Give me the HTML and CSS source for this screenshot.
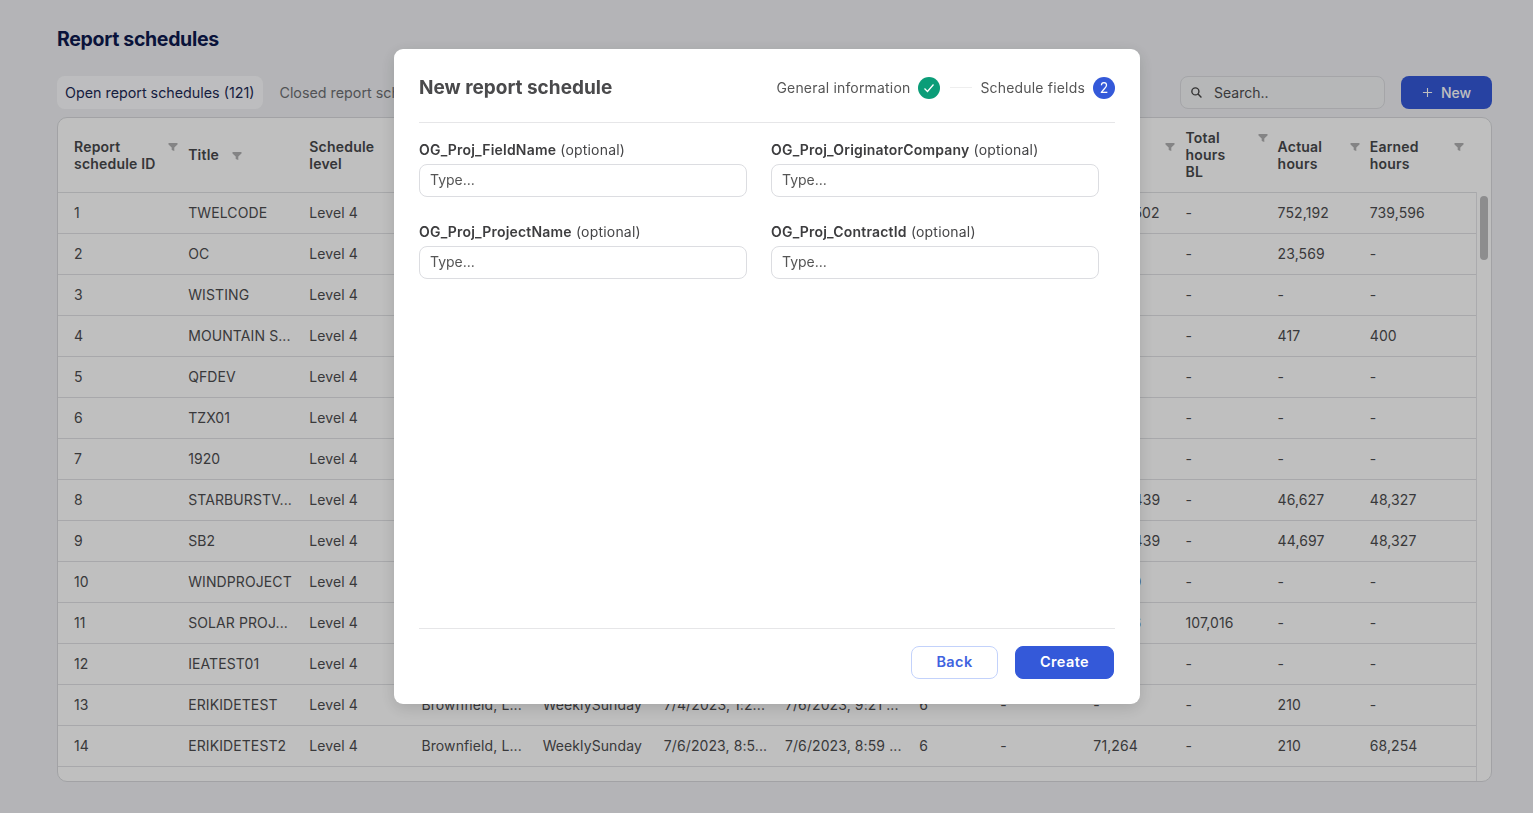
FILE: index.html
```html
<!DOCTYPE html>
<html lang="en">
<head>
<meta charset="utf-8">
<title>Report schedules</title>
<link rel="stylesheet" href="styles.css">
</head>
<body>
<svg class="sprite" width="0" height="0" aria-hidden="true"><defs><symbol id="funnel" viewBox="0 0 10 10"><path d="M0.5 1h9v1.6L6.3 5.6V9L3.7 8V5.6L0.5 2.6z"/></symbol></defs></svg>
<main class="page">
  <h1 class="page-title">Report schedules</h1>
  <div class="toolbar">
    <div class="tabs">
      <span class="tab tab-active">Open report schedules (121)</span>
      <span class="tab">Closed report schedules (12)</span>
    </div>
    <div class="actions">
      <label class="search">
        <svg class="search-icon" viewBox="0 0 14 14"><circle cx="5.8" cy="5.8" r="3.8"/><path d="M8.7 8.7l3.6 3.6"/></svg>
        <span>Search..</span>
      </label>
      <button class="new-btn"><svg class="plus" viewBox="0 0 12 12"><path d="M6 1v10M1 6h10"/></svg>New</button>
    </div>
  </div>
  <div class="table-card">
    <div class="table-scroll">
      <table class="grid">
        <colgroup>
          <col class="c1"><col class="c2"><col class="c3"><col class="c4"><col class="c5"><col class="c6"><col class="c7"><col class="c8"><col class="c9"><col class="c10"><col class="c11"><col class="c12"><col class="c13">
        </colgroup>
        <thead>
          <tr>
            <th><div class="th"><span>Report<br>schedule ID</span><svg class="funnel"><use href="#funnel"/></svg></div></th>
            <th><div class="th th-near"><span>Title</span><svg class="funnel"><use href="#funnel"/></svg></div></th>
            <th><div class="th"><span>Schedule<br>level</span></div></th>
            <th><div class="th"><span>Project<br>type</span></div></th>
            <th><div class="th"><span>Frequency</span></div></th>
            <th><div class="th"><span>Created</span></div></th>
            <th><div class="th"><span>Updated</span></div></th>
            <th><div class="th"><span>Rev</span></div></th>
            <th><div class="th"><span>Cost<br>BL</span></div></th>
            <th><div class="th"><span>Total<br>hours</span><svg class="funnel"><use href="#funnel"/></svg></div></th>
            <th><div class="th"><span>Total<br>hours<br>BL</span><svg class="funnel"><use href="#funnel"/></svg></div></th>
            <th><div class="th"><span>Actual<br>hours</span><svg class="funnel"><use href="#funnel"/></svg></div></th>
            <th><div class="th th-last"><span>Earned<br>hours</span><svg class="funnel"><use href="#funnel"/></svg></div></th>
          </tr>
        </thead>
        <tbody>
          <tr><td>1</td><td>TWELCODE</td><td>Level 4</td><td>Brownfield, L...</td><td>WeeklySunday</td><td>6/1/2023, 1:2...</td><td>7/6/2023, 9:21 ...</td><td>6</td><td>-</td><td>1,048,502</td><td>-</td><td>752,192</td><td>739,596</td></tr>
          <tr><td>2</td><td>OC</td><td>Level 4</td><td>Brownfield, L...</td><td>WeeklySunday</td><td>6/2/2023, 1:2...</td><td>7/6/2023, 9:21 ...</td><td>6</td><td>-</td><td>-</td><td>-</td><td>23,569</td><td>-</td></tr>
          <tr><td>3</td><td>WISTING</td><td>Level 4</td><td>Brownfield, L...</td><td>WeeklySunday</td><td>6/2/2023, 1:2...</td><td>7/6/2023, 9:21 ...</td><td>6</td><td>-</td><td>-</td><td>-</td><td>-</td><td>-</td></tr>
          <tr><td>4</td><td>MOUNTAIN S...</td><td>Level 4</td><td>Brownfield, L...</td><td>WeeklySunday</td><td>6/3/2023, 1:2...</td><td>7/6/2023, 9:21 ...</td><td>6</td><td>-</td><td>-</td><td>-</td><td>417</td><td>400</td></tr>
          <tr><td>5</td><td>QFDEV</td><td>Level 4</td><td>Brownfield, L...</td><td>WeeklySunday</td><td>6/3/2023, 1:2...</td><td>7/6/2023, 9:21 ...</td><td>6</td><td>-</td><td>-</td><td>-</td><td>-</td><td>-</td></tr>
          <tr><td>6</td><td>TZX01</td><td>Level 4</td><td>Brownfield, L...</td><td>WeeklySunday</td><td>6/4/2023, 1:2...</td><td>7/6/2023, 9:21 ...</td><td>6</td><td>-</td><td>-</td><td>-</td><td>-</td><td>-</td></tr>
          <tr><td>7</td><td>1920</td><td>Level 4</td><td>Brownfield, L...</td><td>WeeklySunday</td><td>6/4/2023, 1:2...</td><td>7/6/2023, 9:21 ...</td><td>6</td><td>-</td><td>-</td><td>-</td><td>-</td><td>-</td></tr>
          <tr><td>8</td><td>STARBURSTV...</td><td>Level 4</td><td>Brownfield, L...</td><td>WeeklySunday</td><td>6/5/2023, 1:2...</td><td>7/6/2023, 9:21 ...</td><td>6</td><td>-</td><td>1,048,439</td><td>-</td><td>46,627</td><td>48,327</td></tr>
          <tr><td>9</td><td>SB2</td><td>Level 4</td><td>Brownfield, L...</td><td>WeeklySunday</td><td>6/5/2023, 1:2...</td><td>7/6/2023, 9:21 ...</td><td>6</td><td>-</td><td>1,048,439</td><td>-</td><td>44,697</td><td>48,327</td></tr>
          <tr><td>10</td><td>WINDPROJECT</td><td>Level 4</td><td>Brownfield, L...</td><td>WeeklySunday</td><td>6/6/2023, 1:2...</td><td>7/6/2023, 9:21 ...</td><td>6</td><td>-</td><td>107,010</td><td>-</td><td>-</td><td>-</td></tr>
          <tr><td>11</td><td>SOLAR PROJ...</td><td>Level 4</td><td>Brownfield, L...</td><td>WeeklySunday</td><td>6/6/2023, 1:2...</td><td>7/6/2023, 9:21 ...</td><td>6</td><td>-</td><td>107,016</td><td>107,016</td><td>-</td><td>-</td></tr>
          <tr><td>12</td><td>IEATEST01</td><td>Level 4</td><td>Brownfield, L...</td><td>WeeklySunday</td><td>7/3/2023, 1:2...</td><td>7/6/2023, 9:21 ...</td><td>6</td><td>-</td><td>-</td><td>-</td><td>-</td><td>-</td></tr>
          <tr><td>13</td><td>ERIKIDETEST</td><td>Level 4</td><td>Brownfield, L...</td><td>WeeklySunday</td><td>7/4/2023, 1:2...</td><td>7/6/2023, 9:21 ...</td><td>6</td><td>-</td><td>-</td><td>-</td><td>210</td><td>-</td></tr>
          <tr><td>14</td><td>ERIKIDETEST2</td><td>Level 4</td><td>Brownfield, L...</td><td>WeeklySunday</td><td>7/6/2023, 8:5...</td><td>7/6/2023, 8:59 ...</td><td>6</td><td>-</td><td>71,264</td><td>-</td><td>210</td><td>68,254</td></tr>
          <tr><td>15</td><td>ERIKIDETEST3</td><td>Level 4</td><td>Brownfield, L...</td><td>WeeklySunday</td><td>7/6/2023, 9:1...</td><td>7/6/2023, 9:14 ...</td><td>6</td><td>-</td><td>-</td><td>-</td><td>-</td><td>-</td></tr>
        </tbody>
      </table>
    </div>
    <div class="scroll-track"><div class="scroll-thumb"></div></div>
  </div>
</main>
<div class="overlay"></div>
<section class="modal" role="dialog" aria-label="New report schedule">
  <header class="modal-head">
    <h2 class="modal-title">New report schedule</h2>
    <ol class="steps">
      <li class="step">General information
        <span class="badge badge-done"><svg class="check" viewBox="0 0 12 12"><path d="M1.5 6.5l3 3 6-7"/></svg></span>
      </li>
      <li class="step-line"></li>
      <li class="step">Schedule fields <span class="badge badge-current">2</span></li>
    </ol>
  </header>
  <div class="fields">
    <div class="field"><label class="field-label"><b>OG_Proj_FieldName</b> (optional)</label><input class="input" placeholder="Type..."></div>
    <div class="field"><label class="field-label"><b>OG_Proj_OriginatorCompany</b> (optional)</label><input class="input" placeholder="Type..."></div>
    <div class="field"><label class="field-label"><b>OG_Proj_ProjectName</b> (optional)</label><input class="input" placeholder="Type..."></div>
    <div class="field"><label class="field-label"><b>OG_Proj_ContractId</b> (optional)</label><input class="input" placeholder="Type..."></div>
  </div>
  <footer class="modal-foot">
    <button class="btn btn-back">Back</button>
    <button class="btn btn-create">Create</button>
  </footer>
</section>
</body>
</html>
```
FILE: styles.css
```css
* { box-sizing: border-box; }
html, body { margin: 0; height: 100%; }
body {
  background: #f0f1f4;
  font-family: Inter, "Liberation Sans", sans-serif;
  font-size: 14px;
  color: #4d4d4f;
  overflow: hidden;
}
.sprite { position: absolute; }
.page {
  height: 813px;
  padding: 27px 41px 31px 57px;
  display: flex;
  flex-direction: column;
}
.page-title {
  margin: 0;
  font-size: 19.5px;
  line-height: 24px;
  font-weight: 700;
  letter-spacing: -0.32px;
  color: #0e1a4f;
}
.toolbar {
  margin-top: 25px;
  display: flex;
  justify-content: space-between;
  height: 33px;
}
.tabs { display: flex; gap: 8px; }
.tab {
  display: flex;
  align-items: center;
  padding: 0 9px 0 8px;
  border-radius: 8px;
  font-size: 14.3px;
  color: #6e6f73;
}
.tab-active { background: #fdfdff; color: #1c2a55; }
.actions { display: flex; gap: 16px; }
.search {
  width: 205px;
  display: flex;
  align-items: center;
  gap: 11px;
  padding-left: 9px;
  border: 1px solid #dcdde1;
  border-radius: 8px;
  background: #f3f4f6;
  color: #4d4d4f;
}
.search-icon { width: 13px; height: 13px; fill: none; stroke: #444; stroke-width: 1.5; }
.new-btn {
  width: 91px;
  border: 0;
  border-radius: 8px;
  background: #3459d9;
  color: #fff;
  font: 500 14px Inter, sans-serif;
  display: flex;
  align-items: center;
  justify-content: center;
  gap: 8px;
}
.plus { width: 11px; height: 11px; fill: none; stroke: #fff; stroke-width: 1.2; }
.table-card {
  margin-top: 8px;
  flex: 1;
  min-height: 0;
  display: flex;
  background: #fff;
  border: 1px solid #d8d9dd;
  border-radius: 10px;
  overflow: hidden;
}
.table-scroll { flex: 1; min-width: 0; overflow: hidden; }
.grid { width: 1418px; border-collapse: collapse; table-layout: fixed; }
.c1 { width: 114px; } .c2 { width: 121px; } .c3 { width: 112px; } .c4, .c5, .c6 { width: 121px; }
.c7 { width: 134px; } .c8 { width: 81px; } .c9 { width: 93px; } .c10, .c11, .c12 { width: 92px; } .c13 { width: 122px; }
.grid th {
  height: 74px;
  padding: 0 0 0 16px;
  text-align: left;
  vertical-align: middle;
  border-bottom: 1px solid #dfe0e3;
  font-size: 14px;
  line-height: 17px;
  letter-spacing: 0.2px;
  font-weight: 600;
  color: #47484b;
}
.th { display: flex; justify-content: space-between; align-items: flex-start; margin-right: -6px; }
.th-near { justify-content: flex-start; gap: 13px; }
.th-last { margin-right: 12px; }
.funnel { width: 10px; height: 10px; flex: none; margin-top: 4px; fill: #b0b0b2; }
.th-near .funnel { margin-top: 5px; }
.grid td {
  height: 41px;
  padding: 0 0 0 16px;
  white-space: nowrap;
  overflow: hidden;
  border-bottom: 1px solid #e0e1e4;
  font-size: 14px;
  letter-spacing: 0.1px;
}
.scroll-track {
  width: 15px;
  flex: none;
  margin-top: 74px;
  border-left: 1px solid #e4e5e8;
  padding: 4px 3px;
}
.scroll-thumb { width: 8px; height: 64px; border-radius: 4px; background: #bcbcbe; }
.overlay { position: fixed; inset: 0; background: rgba(0, 0, 0, 0.25); }
.modal {
  position: fixed;
  left: 394px;
  top: 49px;
  width: 746px;
  height: 655px;
  padding: 0 25px;
  display: flex;
  flex-direction: column;
  background: #fff;
  border-radius: 9px;
  box-shadow: 0 4px 16px rgba(0, 0, 0, 0.14);
}
.modal-head {
  height: 74px;
  flex: none;
  display: flex;
  align-items: center;
  justify-content: space-between;
  border-bottom: 1px solid #e6e6e8;
  padding-top: 4px;
}
.modal-title { margin: 0; font-size: 19px; font-weight: 700; color: #4a4a4c; }
.steps { list-style: none; display: flex; align-items: center; margin: 0; padding: 0; gap: 8px; }
.step { display: flex; align-items: center; gap: 8px; font-size: 14px; color: #555; letter-spacing: 0.18px; }
.step-line { width: 22px; height: 1px; margin: 0 0 0 2px; background: #eeeeee; }
.badge {
  width: 22px;
  height: 22px;
  border-radius: 50%;
  display: flex;
  align-items: center;
  justify-content: center;
  color: #fff;
}
.badge-done { background: #0b9d78; }
.badge-current { background: #3459d9; font-size: 14px; }
.check { width: 12px; height: 12px; fill: none; stroke: #fff; stroke-width: 1.3; }
.fields {
  display: grid;
  grid-template-columns: 328px 328px;
  column-gap: 24px;
  row-gap: 25px;
  padding-top: 17px;
  flex: 1;
  align-content: start;
}
.field { display: flex; flex-direction: column; gap: 4px; }
.field-label { font-size: 14px; line-height: 20px; letter-spacing: 0.19px; color: #454547; }
.field-label b { font-weight: 600; color: #3d3d3f; }
.input {
  height: 33px;
  padding: 0 10px 2px;
  border: 1px solid #dcdde1;
  border-radius: 8px;
  font: 14px Inter, sans-serif;
  background: #fff;
}
.input::placeholder { color: #555; opacity: 1; }
.modal-foot {
  height: 76px;
  flex: none;
  display: flex;
  justify-content: flex-end;
  gap: 17px;
  padding: 17px 1px 0 0;
  border-top: 1px solid #e6e6e8;
}
.btn {
  height: 33px;
  padding: 0 0 2px;
  border-radius: 8px;
  font: 600 14.5px Inter, sans-serif;
  letter-spacing: 0.4px;
}
.btn-back { width: 87px; background: #fff; border: 1px solid #c3d2fb; color: #3f63e0; }
.btn-create { width: 99px; background: #3459d9; border: 1px solid #3459d9; color: #fff; }
```
